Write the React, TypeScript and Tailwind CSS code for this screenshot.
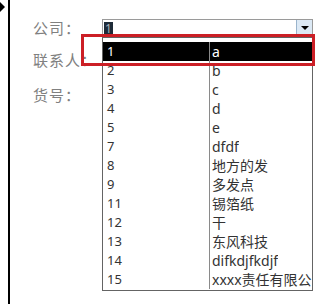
const rows: [string, string][] = [
  ["1", "a"],
  ["2", "b"],
  ["3", "c"],
  ["4", "d"],
  ["5", "e"],
  ["7", "dfdf"],
  ["8", "地方的发"],
  ["9", "多发点"],
  ["11", "锡箔纸"],
  ["12", "干"],
  ["13", "东风科技"],
  ["14", "difkdjfkdjf"],
  ["15", "xxxx责任有限公司"],
];

const font = { fontFamily: '"Noto Sans", "Noto Sans CJK SC", sans-serif' };

export default function App() {
  return (
    <div className="relative flex h-[306px] w-[332px] overflow-hidden bg-white" style={font}>
      {/* left edge marker */}
      <div className="w-[8px] pt-[2px]">
        <div className="h-0 w-0 border-y-[5px] border-l-[5px] border-y-transparent border-l-black" />
      </div>
      <div className="h-[304px] w-[2px] bg-black" />

      <div className="grid grid-cols-[69px_211px] content-start pl-[23px] pt-[19px] text-[15px] tracking-[1px] text-[#808080]">
        <div className="flex h-[18px] items-center">公司：</div>
        <div className="relative tracking-normal">
          <div className="flex h-[18px] items-stretch border border-[#9a9a9a] bg-white">
            <div className="flex flex-1 items-center pl-[1px]">
              <span className="bg-[#1e2b38] px-[1px] text-[12px] leading-[13px] text-[#a9b4bd]">1</span>
            </div>
            <div className="flex w-[16px] items-center justify-center border-l border-[#9ab4cc] bg-[#dce9f5]">
              <div className="h-0 w-0 border-x-[4px] border-t-[4px] border-x-transparent border-t-black" />
            </div>
          </div>
          {/* open dropdown */}
          <div className="absolute left-0 top-full z-10 w-[211px] border border-[#646464] bg-white pb-[1px] pt-[4px] text-[13px] text-[#333]">
            {rows.map(([id, name], i) => (
              <div
                key={id}
                className={`flex h-[19px] items-center ${i === 0 ? "bg-black text-white" : ""}`}
              >
                <div className="w-[106px] shrink-0 pl-[4px]">{id}</div>
                <div className="h-full w-px shrink-0 bg-[#8a8a8a]" />
                <div className="overflow-hidden whitespace-nowrap pl-[2px] text-[14px]">{name}</div>
              </div>
            ))}
          </div>
        </div>
        <div className="mt-[13px] flex h-[20px] items-center">联系人：</div>
        <div />
        <div className="mt-[15px] flex h-[20px] items-center">货号：</div>
        <div />
      </div>

      {/* annotation box */}
      <div className="absolute left-[81px] top-[34px] z-20 h-[32px] w-[234px] border-[3px] border-[#cc1f26]" />
    </div>
  );
}
